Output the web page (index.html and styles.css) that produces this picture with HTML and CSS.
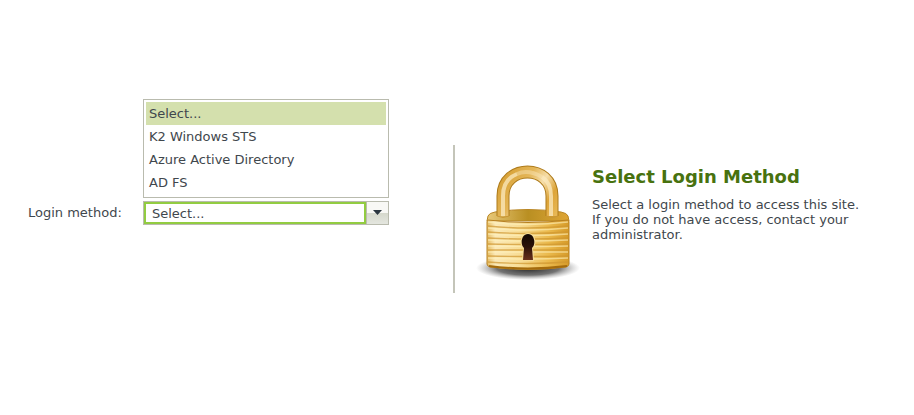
FILE: index.html
```
<!DOCTYPE html>
<html lang="en">
<head>
<meta charset="utf-8">
<meta name="viewport" content="width=device-width, initial-scale=1">
<title>Select Login Method</title>
<link rel="stylesheet" href="styles.css">
</head>
<body>
<main class="login">
  <form class="login-form">
    <label class="login-label" for="method">Login method:</label>
    <div class="combo">
      <ul class="combo-list" role="listbox" aria-label="Login method">
        <li class="combo-option is-selected" role="option" aria-selected="true">Select...</li>
        <li class="combo-option" role="option" aria-selected="false">K2 Windows STS</li>
        <li class="combo-option" role="option" aria-selected="false">Azure Active Directory</li>
        <li class="combo-option" role="option" aria-selected="false">AD FS</li>
      </ul>
      <select class="combo-field" id="method">
        <option>Select...</option>
        <option>K2 Windows STS</option>
        <option>Azure Active Directory</option>
        <option>AD FS</option>
      </select>
      <button class="combo-button" type="button" aria-label="Show login methods">
        <svg width="9" height="5" viewBox="0 0 9 5" aria-hidden="true"><path d="M0 0H9L4.5 5Z" fill="#2b3640"/></svg>
      </button>
    </div>
  </form>
  <section class="intro">
    <svg class="padlock" width="106" height="120" viewBox="0 0 106 120" aria-hidden="true">
      <defs>
        <linearGradient id="body" x1="0" x2="1" y1="0" y2="0">
          <stop offset="0" stop-color="#e6bd62"/><stop offset=".1" stop-color="#fbe9b8"/><stop offset=".4" stop-color="#f8dd95"/><stop offset=".75" stop-color="#eab94c"/><stop offset="1" stop-color="#d69a28"/>
        </linearGradient>
        <linearGradient id="top" x1="0" x2="1" y1="0" y2="0">
          <stop offset="0" stop-color="#e8c878"/><stop offset=".5" stop-color="#b98f22"/><stop offset="1" stop-color="#dfa535"/>
        </linearGradient>
        <linearGradient id="shackle" gradientUnits="userSpaceOnUse" x1="22" x2="83" y1="10" y2="50">
          <stop offset="0" stop-color="#d39a2c"/><stop offset=".4" stop-color="#e4b658"/><stop offset=".6" stop-color="#f6deaa"/><stop offset=".8" stop-color="#dda438"/><stop offset="1" stop-color="#e8b854"/>
        </linearGradient>
        <linearGradient id="hole" x1="0" x2="0" y1="0" y2="1">
          <stop offset="0" stop-color="#120802"/><stop offset=".5" stop-color="#2c1109"/><stop offset="1" stop-color="#69301c"/>
        </linearGradient>
        <radialGradient id="shadow">
          <stop offset="0" stop-color="#222"/><stop offset=".6" stop-color="#444" stop-opacity=".75"/><stop offset=".82" stop-color="#777" stop-opacity=".35"/><stop offset="1" stop-color="#999" stop-opacity="0"/>
        </radialGradient>
        <clipPath id="face"><path d="M13 58Q53 63 93 58V104Q53 110 13 104Z"/></clipPath>
      </defs>
      <ellipse cx="53" cy="106" rx="52" ry="12" fill="url(#shadow)"/>
      <path d="M13 54Q14 51 20 50Q53 45 86 50Q92 51 93 54L94 59H12Z" fill="url(#top)" stroke="#b98624"/>
      <path d="M13 58Q53 63 93 58Q94 58 94 60V102Q94 104 91 105Q53 110 15 105Q12 104 12 102V60Q12 58 13 58Z" fill="url(#body)" stroke="#b78020"/>
      <g clip-path="url(#face)">
        <path d="M13 64Q53 68 93 64M13 70Q53 73 93 70M13 76Q53 78 93 76M13 82Q53 83 93 82M13 88H93M13 94Q53 95 93 94M13 100Q53 103 93 100" fill="none" stroke="#cf952f" stroke-width="1.3" opacity=".7"/>
        <path d="M13 60Q53 65 93 60M13 66Q53 70 93 66M13 72Q53 75 93 72M13 78Q53 80 93 78M13 84Q53 85 93 84M13 90H93M13 96Q53 98 93 96" fill="none" stroke="#fff1bd" stroke-width="1.3" opacity=".6"/>
      </g>
      <path d="M14 104Q53 109 92 104" fill="none" stroke="#a46b0c" stroke-width="2"/>
      <g fill="none">
        <path d="M28 54V34C28 2 77 2 77 34V54" stroke="#ae7b1b" stroke-width="13"/>
        <path d="M28 54V34C28 2 77 2 77 34V54" stroke="url(#shackle)" stroke-width="11"/>
        <path d="M28 54V34C28 24 32 16 42 12M76 54V34C76 26 73 19 67 15" stroke="#fbe9bf" stroke-width="4" opacity=".75"/>
        <path d="M42 12Q53 7 67 15" stroke="#fbe9bf" stroke-width="4" opacity=".45"/>
        <path d="M22 54Q28 57 34 54M71 54Q77 57 83 54" stroke="#c99636"/>
      </g>
      <path d="M48 98L49 86C45 83 46 72 53 72C60 72 61 83 57 86L58 98Z" fill="url(#hole)" stroke="#f7dc95" stroke-width="2" stroke-linejoin="round" paint-order="stroke"/>
    </svg>
    <div class="intro-text">
      <h1 class="intro-title">Select Login Method</h1>
      <p class="intro-copy">Select a login method to access this site.<br>If you do not have access, contact your administrator.</p>
    </div>
  </section>
</main>
</body>
</html>
```
FILE: styles.css
```
* {
  box-sizing: border-box;
}

body {
  margin: 0;
  background: #fff;
  color: #3f474d;
  font: 13px/15px Verdana, "DejaVu Sans", sans-serif;
}

.login {
  display: grid;
  grid-template-columns: 1fr 1fr;
  padding: 145px 36px 0 28px;
}

.login-form {
  display: flex;
  align-items: flex-start;
  padding: 56px 64px 0 0;
}

.login-label {
  width: 115px;
  line-height: 24px;
}

.combo {
  position: relative;
  display: flex;
  flex: 1;
  height: 24px;
  border: 1px solid #b9bbae;
}

.combo-list {
  position: absolute;
  right: -1px;
  bottom: 26px;
  left: -1px;
  margin: 0;
  padding: 2px;
  border: 1px solid #b9bbae;
  background: #fff;
  list-style: none;
}

.combo-option {
  height: 23px;
  padding: 0 3px;
  line-height: 23px;
}

.combo-option:last-child {
  height: 24px;
  line-height: 24px;
}

.is-selected {
  background: #d4e0ad;
}

.combo-field {
  flex: 1;
  min-width: 0;
  padding: 0 6px;
  border: 2px solid #92cc41;
  border-radius: 0;
  appearance: none;
  background: #fff;
  color: inherit;
  font: inherit;
}

.combo-button {
  display: flex;
  align-items: center;
  justify-content: center;
  width: 22px;
  padding: 0 0 2px;
  border: 0;
  border-left: 1px solid #b9bbae;
  background: linear-gradient(#f8f8f5 50%, #d5d8cc 50%, #e4e6df);
}

.intro {
  display: flex;
  align-items: flex-start;
  gap: 11px;
  min-height: 148px;
  padding: 17px 0 0 20px;
  border-left: 2px solid #c4c5b9;
}

.padlock {
  flex: none;
}

.intro-text {
  flex: 1;
}

.intro-title {
  margin: 3px 0 8px;
  color: #48720f;
  font-size: 18px;
  line-height: 24px;
}

.intro-copy {
  margin: 0;
}
```
